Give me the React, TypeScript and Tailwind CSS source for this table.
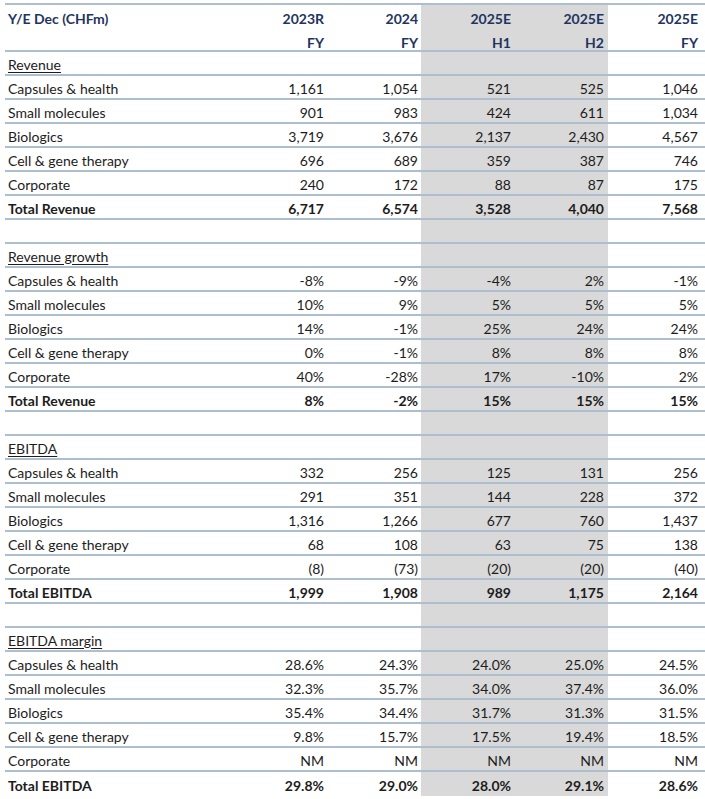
import React from 'react';

type Row = { label: string; values: string[]; bold?: boolean };

type Section = { title: string; rows: Row[] };

const sections: Section[] = [
  {
    title: 'Revenue',
    rows: [
      { label: 'Capsules & health', values: ['1,161', '1,054', '521', '525', '1,046'] },
      { label: 'Small molecules', values: ['901', '983', '424', '611', '1,034'] },
      { label: 'Biologics', values: ['3,719', '3,676', '2,137', '2,430', '4,567'] },
      { label: 'Cell & gene therapy', values: ['696', '689', '359', '387', '746'] },
      { label: 'Corporate', values: ['240', '172', '88', '87', '175'] },
      { label: 'Total Revenue', values: ['6,717', '6,574', '3,528', '4,040', '7,568'], bold: true },
    ],
  },
  {
    title: 'Revenue growth',
    rows: [
      { label: 'Capsules & health', values: ['-8%', '-9%', '-4%', '2%', '-1%'] },
      { label: 'Small molecules', values: ['10%', '9%', '5%', '5%', '5%'] },
      { label: 'Biologics', values: ['14%', '-1%', '25%', '24%', '24%'] },
      { label: 'Cell & gene therapy', values: ['0%', '-1%', '8%', '8%', '8%'] },
      { label: 'Corporate', values: ['40%', '-28%', '17%', '-10%', '2%'] },
      { label: 'Total Revenue', values: ['8%', '-2%', '15%', '15%', '15%'], bold: true },
    ],
  },
  {
    title: 'EBITDA',
    rows: [
      { label: 'Capsules & health', values: ['332', '256', '125', '131', '256'] },
      { label: 'Small molecules', values: ['291', '351', '144', '228', '372'] },
      { label: 'Biologics', values: ['1,316', '1,266', '677', '760', '1,437'] },
      { label: 'Cell & gene therapy', values: ['68', '108', '63', '75', '138'] },
      { label: 'Corporate', values: ['(8)', '(73)', '(20)', '(20)', '(40)'] },
      { label: 'Total EBITDA', values: ['1,999', '1,908', '989', '1,175', '2,164'], bold: true },
    ],
  },
  {
    title: 'EBITDA margin',
    rows: [
      { label: 'Capsules & health', values: ['28.6%', '24.3%', '24.0%', '25.0%', '24.5%'] },
      { label: 'Small molecules', values: ['32.3%', '35.7%', '34.0%', '37.4%', '36.0%'] },
      { label: 'Biologics', values: ['35.4%', '34.4%', '31.7%', '31.3%', '31.5%'] },
      { label: 'Cell & gene therapy', values: ['9.8%', '15.7%', '17.5%', '19.4%', '18.5%'] },
      { label: 'Corporate', values: ['NM', 'NM', 'NM', 'NM', 'NM'] },
      { label: 'Total EBITDA', values: ['29.8%', '29.0%', '28.0%', '29.1%', '28.6%'], bold: true },
    ],
  },
];

const colClass = [
  'w-[93px] pr-[4px]',
  'w-[93px] pr-[3px]',
  'w-[94px] pr-[4px] bg-[#d9d9d9]',
  'w-[93px] pr-[4px] bg-[#d9d9d9]',
  'w-[97px] pr-[7px]',
];

const Line: React.FC<{ label?: React.ReactNode; values?: string[]; bold?: boolean; last?: boolean }> = ({
  label,
  values = ['', '', '', '', ''],
  bold,
  last,
}) => (
  <div className={`flex h-[24px] ${last ? '' : 'border-b-2 border-[#adbfcf]'} ${bold ? 'font-bold' : ''}`}>
    <div className="w-[230px] pl-[3px] pt-[2px] flex items-center">{label}</div>
    {values.map((v, i) => (
      <div key={i} className={`${colClass[i]} pt-[2px] flex items-center justify-end`}>
        {v}
      </div>
    ))}
  </div>
);

export default function App() {
  return (
    <div
      className="w-[705px] h-[799px] bg-white pl-[5px] pt-[3px] text-[14px] text-[#1c1c1c] overflow-hidden"
      style={{ fontFamily: 'Lato, "Open Sans", sans-serif' }}
    >
      <div className="border-t-2 border-[#adbfcf]" />
      <div className="flex h-[47px] border-b-2 border-[#adbfcf] font-bold text-[#1f3561]">
        <div className="w-[230px] pl-[3px] pt-[3px]">Y/E Dec (CHFm)</div>
        {[
          ['2023R', 'FY'],
          ['2024', 'FY'],
          ['2025E', 'H1'],
          ['2025E', 'H2'],
          ['2025E', 'FY'],
        ].map(([a, b], i) => (
          <div key={i} className={`${colClass[i]} flex flex-col items-end pt-[3px] gap-[3px]`}>
            <span>{a}</span>
            <span>{b}</span>
          </div>
        ))}
      </div>
      {sections.map((s, si) => (
        <div key={s.title}>
          <Line label={<span className="underline underline-offset-2">{s.title}</span>} />
          {s.rows.map((r, ri) => (
            <Line
              key={r.label}
              label={r.label}
              values={r.values}
              bold={r.bold}
              last={si === sections.length - 1 && ri === s.rows.length - 1}
            />
          ))}
          {si < sections.length - 1 && <Line />}
        </div>
      ))}
    </div>
  );
}
